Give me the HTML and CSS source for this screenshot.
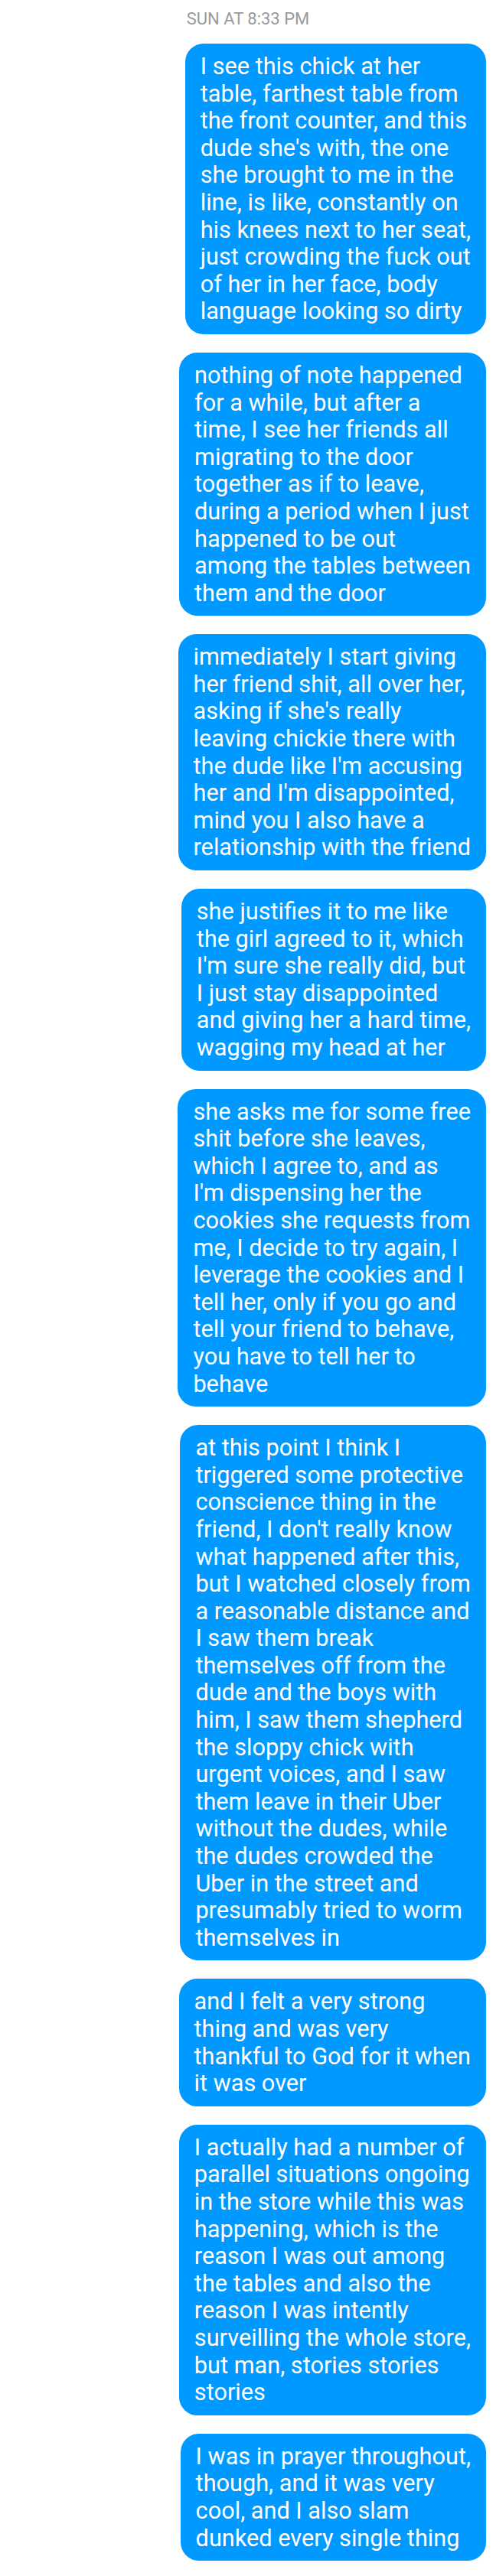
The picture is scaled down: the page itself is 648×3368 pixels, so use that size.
FILE: index.html
```html
<!DOCTYPE html>
<html>
<head>
<meta charset="utf-8">
<link rel="stylesheet" href="styles.css">
</head>
<body>
<div class="thread">
  <div class="stamp">SUN AT 8:33 PM</div>
  <div class="bubble">I see this chick at her<br>table, farthest table from<br>the front counter, and this<br>dude she's with, the one<br>she brought to me in the<br>line, is like, constantly on<br>his knees next to her seat,<br>just crowding the fuck out<br>of her in her face, body<br>language looking so dirty</div>
  <div class="bubble">nothing of note happened<br>for a while, but after a<br>time, I see her friends all<br>migrating to the door<br>together as if to leave,<br>during a period when I just<br>happened to be out<br>among the tables between<br>them and the door</div>
  <div class="bubble">immediately I start giving<br>her friend shit, all over her,<br>asking if she's really<br>leaving chickie there with<br>the dude like I'm accusing<br>her and I'm disappointed,<br>mind you I also have a<br>relationship with the friend</div>
  <div class="bubble">she justifies it to me like<br>the girl agreed to it, which<br>I'm sure she really did, but<br>I just stay disappointed<br>and giving her a hard time,<br>wagging my head at her</div>
  <div class="bubble">she asks me for some free<br>shit before she leaves,<br>which I agree to, and as<br>I'm dispensing her the<br>cookies she requests from<br>me, I decide to try again, I<br>leverage the cookies and I<br>tell her, only if you go and<br>tell your friend to behave,<br>you have to tell her to<br>behave</div>
  <div class="bubble">at this point I think I<br>triggered some protective<br>conscience thing in the<br>friend, I don't really know<br>what happened after this,<br>but I watched closely from<br>a reasonable distance and<br>I saw them break<br>themselves off from the<br>dude and the boys with<br>him, I saw them shepherd<br>the sloppy chick with<br>urgent voices, and I saw<br>them leave in their Uber<br>without the dudes, while<br>the dudes crowded the<br>Uber in the street and<br>presumably tried to worm<br>themselves in</div>
  <div class="bubble">and I felt a very strong<br>thing and was very<br>thankful to God for it when<br>it was over</div>
  <div class="bubble">I actually had a number of<br>parallel situations ongoing<br>in the store while this was<br>happening, which is the<br>reason I was out among<br>the tables and also the<br>reason I was intently<br>surveilling the whole store,<br>but man, stories stories<br>stories</div>
  <div class="bubble">I was in prayer throughout,<br>though, and it was very<br>cool, and I also slam<br>dunked every single thing</div>
</div>
</body>
</html>
```

FILE: styles.css
```css
html, body {
  margin: 0;
  padding: 0;
  background: #ffffff;
}

body {
  font-family: Roboto, "Liberation Sans", sans-serif;
}

.thread {
  display: flex;
  flex-direction: column;
  align-items: flex-end;
  gap: 24px;
  padding: 12px 13px 20px 13px;
}

.stamp {
  align-self: center;
  font-size: 22px;
  line-height: 26px;
  color: #9a9a9a;
  margin-bottom: -5px;
}

.bubble {
  background: #0099ff;
  color: #ffffff;
  font-size: 30.7px;
  line-height: 35.6px;
  padding: 12px 20px;
  border-radius: 24px;
  white-space: nowrap;
}
```
